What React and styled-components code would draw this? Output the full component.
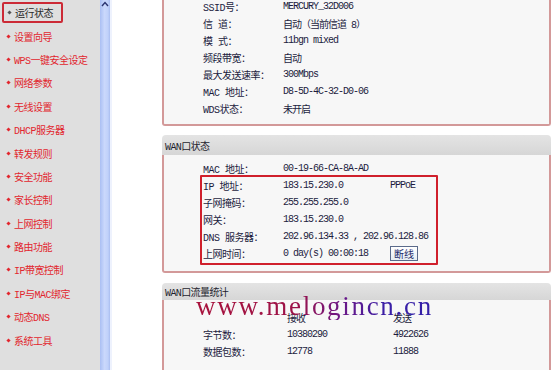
import React from "react"
import styled, { createGlobalStyle } from "styled-components"

const Global = createGlobalStyle`
  html, body {
    margin: 0;
    padding: 0;
    background: #ffffff;
  }
  body {
    width: 553px;
    height: 370px;
    overflow: hidden;
    font-family: "Liberation Mono", "Noto Sans CJK SC", monospace;
  }
`

const menu = [
  "运行状态",
  "设置向导",
  "WPS一键安全设定",
  "网络参数",
  "无线设置",
  "DHCP服务器",
  "转发规则",
  "安全功能",
  "家长控制",
  "上网控制",
  "路由功能",
  "IP带宽控制",
  "IP与MAC绑定",
  "动态DNS",
  "系统工具",
]

const wireless = [
  ["SSID号：", "MERCURY_32D006"],
  ["信 道：", "自动（当前信道 8）"],
  ["模 式：", "11bgn mixed"],
  ["频段带宽：", "自动"],
  ["最大发送速率：", "300Mbps"],
  ["MAC 地址：", "D8-5D-4C-32-D0-06"],
  ["WDS状态：", "未开启"],
]

const App = () => {
  return (
    <Page>
      <Global />
      <Sidebar>
        {menu.map((label, i) => (
          <MenuItem key={label} $active={i === 0}>
            <Bullet $active={i === 0} />
            {label}
          </MenuItem>
        ))}
      </Sidebar>
      <Scrollbar>
        <svg width="8" height="6" viewBox="0 0 8 6">
          <path d="M1 5 L4 1.5 L7 5" fill="none" stroke="#2a3470" strokeWidth="1.4" />
        </svg>
      </Scrollbar>
      <Main>
        <Card $cut>
          <Body>
            <Grid $cols="80px auto">
              {wireless.map(([k, v]) => (
                <React.Fragment key={k}>
                  <Label>{k}</Label>
                  <Value>{v}</Value>
                </React.Fragment>
              ))}
            </Grid>
          </Body>
        </Card>

        <Card>
          <Header>WAN口状态</Header>
          <Body $pt={5} $pb={6}>
            <Grid>
              <Label>MAC 地址：</Label>
              <Value $span>00-19-66-CA-8A-AD</Value>
            </Grid>
            <Highlight>
              <Grid>
                <Label>IP 地址：</Label>
                <Value>183.15.230.0</Value>
                <Value>PPPoE</Value>
                <Label>子网掩码：</Label>
                <Value $span>255.255.255.0</Value>
                <Label>网关：</Label>
                <Value $span>183.15.230.0</Value>
                <Label>DNS 服务器：</Label>
                <Value $span>202.96.134.33 , 202.96.128.86</Value>
                <Label>上网时间：</Label>
                <Value>0 day(s) 00:00:18</Value>
                <Value>
                  <Button>断线</Button>
                </Value>
              </Grid>
            </Highlight>
          </Body>
        </Card>

        <Card>
          <Header $small>WAN口流量统计</Header>
          <Body $pt={9} $pb={20}>
            <Grid $cols="84px 106px auto">
              <Label />
              <Value>接收</Value>
              <Value>发送</Value>
              <Label>字节数：</Label>
              <Value>10380290</Value>
              <Value>4922626</Value>
              <Label>数据包数：</Label>
              <Value>12778</Value>
              <Value>11888</Value>
            </Grid>
          </Body>
        </Card>

        <Watermark>www.melogincn.cn</Watermark>
      </Main>
    </Page>
  )
}

export default App

const Page = styled.div`
  display: flex;
  width: 553px;
  height: 370px;
  overflow: hidden;
`

const Sidebar = styled.nav`
  width: 100px;
  flex: none;
  background: #dfdfdf;
  padding-top: 1px;
  box-sizing: border-box;
`

const MenuItem = styled.div`
  display: flex;
  align-items: center;
  gap: 4px;
  box-sizing: border-box;
  height: 23.4px;
  padding-left: 7px;
  font-family: "Liberation Mono", "Noto Sans CJK SC", monospace;
  font-size: 10px;
  letter-spacing: -0.5px;
  color: ${p => (p.$active ? "#2a2a2a" : "#e2262e")};
  ${p =>
    p.$active &&
    `
    width: 61px;
    height: 21px;
    margin: 1px 0 1.4px 2px;
    padding-left: 4px;
    border: 2px solid #cc2a36;
    border-radius: 2px;
  `}
`

const Bullet = styled.span`
  width: 3px;
  height: 3px;
  background: ${p => (p.$active ? "#555" : "#e2262e")};
  transform: rotate(45deg);
  flex: none;
`

const Scrollbar = styled.div`
  width: 12px;
  flex: none;
  display: flex;
  justify-content: center;
  padding-top: 1px;
  box-sizing: border-box;
  background: linear-gradient(90deg, #aabff3 0%, #cad8fc 45%, #c0d1fa 80%, #a9bdf0 100%);
  border-right: 2px solid #eef2fd;
`

const Main = styled.main`
  position: relative;
  margin-left: 50px;
  width: 389px;
  display: flex;
  flex-direction: column;
  gap: 9px;
`

const Card = styled.section`
  margin-top: ${p => (p.$cut ? "-2px" : "0")};
  & + & + & {
    margin-top: 1px;
  }
`

const Header = styled.div`
  height: ${p => (p.$small ? "17px" : "20px")};
  display: flex;
  align-items: center;
  padding-left: 3px;
  border-radius: 4px 4px 0 0;
  background: linear-gradient(#e4e4e4, #d6d6d6);
  font-size: 10px;
  letter-spacing: -0.6px;
  color: #1e1e2e;
`

const Body = styled.div`
  background: #f7f7f7;
  border: 2px solid #d39999;
  border-top: none;
  border-radius: 0 0 3px 3px;
  padding: ${p => p.$pt || 0}px 0 ${p => (p.$pb === undefined ? 7 : p.$pb)}px 39px;
`

const Grid = styled.div`
  display: grid;
  grid-template-columns: ${p => p.$cols || "80px 107px auto"};
  grid-auto-rows: 17px;
  align-items: center;
`

const Label = styled.div`
  font-size: 10px;
  letter-spacing: -0.5px;
  color: #1c1c3e;
  white-space: nowrap;
`

const Value = styled.div`
  grid-column: ${p => (p.$span ? "span 2" : "auto")};
  font-size: 10px;
  letter-spacing: -1px;
  color: #1c1c3e;
  white-space: nowrap;
`

const Highlight = styled.div`
  width: 233px;
  margin: -2px 0 0 -3px;
  padding: 0 0 1px 1px;
  border: 2px solid #d0202c;
  border-radius: 1px;
`

const Button = styled.span`
  display: inline-flex;
  align-items: center;
  justify-content: center;
  width: 28px;
  height: 15px;
  box-sizing: border-box;
  border: 1px solid #5a6a8a;
  background: linear-gradient(#ffffff, #e6ecf2);
  font-size: 10px;
  letter-spacing: 0;
  color: #1c2a6a;
`

const Watermark = styled.div`
  position: absolute;
  left: 34px;
  top: 293px;
  font-family: "Liberation Serif", serif;
  font-size: 27px;
  line-height: 27px;
  letter-spacing: 1.7px;
  white-space: nowrap;
  background: linear-gradient(90deg, #a8123c 0%, #9c1248 42%, #6a1888 62%, #3a1fa6 80%, #3420a8 100%);
  -webkit-background-clip: text;
  background-clip: text;
  color: transparent;
  pointer-events: none;
`
